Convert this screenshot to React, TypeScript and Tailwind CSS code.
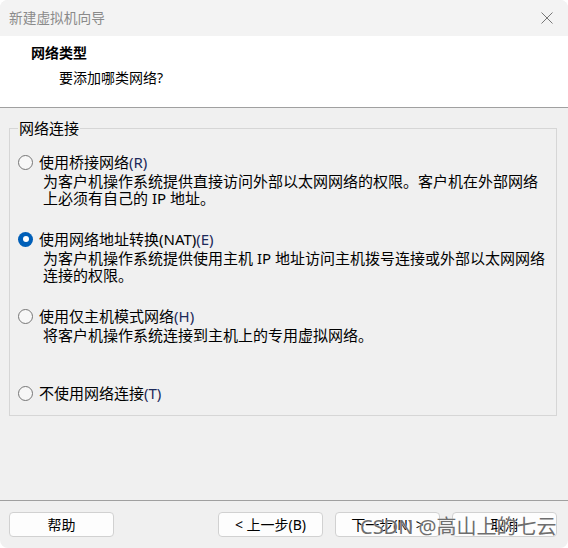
import React from "react";

const FONT = { fontFamily: '"Noto Sans", "Noto Sans CJK SC", sans-serif' };

const OPTIONS = [
  {
    id: "bridged",
    label: "使用桥接网络",
    key: "(R)",
    desc: ["为客户机操作系统提供直接访问外部以太网网络的权限。客户机在外部网络", "上必须有自己的 IP 地址。"],
  },
  {
    id: "nat",
    label: "使用网络地址转换(NAT)",
    key: "(E)",
    desc: ["为客户机操作系统提供使用主机 IP 地址访问主机拨号连接或外部以太网网络", "连接的权限。"],
  },
  {
    id: "hostonly",
    label: "使用仅主机模式网络",
    key: "(H)",
    desc: ["将客户机操作系统连接到主机上的专用虚拟网络。"],
  },
  {
    id: "none",
    label: "不使用网络连接",
    key: "(T)",
    desc: [],
  },
];

function Radio({ checked }: { checked: boolean }) {
  if (checked) {
    return (
      <span className="w-[15px] h-[15px] rounded-full bg-[#005fb8] flex items-center justify-center shrink-0">
        <span className="w-[6px] h-[6px] rounded-full bg-white" />
      </span>
    );
  }
  return <span className="w-[15px] h-[15px] rounded-full border border-[#767676] bg-[#f7f7f7] shrink-0" />;
}

function Button({ children, className = "" }: { children: React.ReactNode; className?: string }) {
  return (
    <button
      className={`h-[25px] rounded-[4px] border border-[#d1d1d1] bg-[#fdfdfd] text-[14px] text-black leading-none flex items-center justify-center ${className}`}
    >
      {children}
    </button>
  );
}

export default function App() {
  const selected = "nat";
  return (
    <div className="w-[568px] h-[548px] bg-white" style={FONT}>
      <div className="relative w-full h-full rounded-[8px] overflow-hidden bg-[#f0f0f0] flex flex-col">
        {/* title bar */}
        <div className="h-[36px] bg-[#f3f3f3] flex items-center pl-[9px] pr-[15px]">
          <span className="text-[13.7px] text-[#8a8a8a]">新建虚拟机向导</span>
          <svg className="ml-auto" width="12" height="12" viewBox="0 0 12 12">
            <path d="M0.5 0.5L11.5 11.5M11.5 0.5L0.5 11.5" stroke="#777" strokeWidth="1" />
          </svg>
        </div>

        {/* header */}
        <div className="h-[72px] bg-white border-b border-[#a0a0a0] pl-[31px] pt-[7px]">
          <div className="text-[14px] font-bold leading-[20px] text-black">网络类型</div>
          <div className="text-[14px] leading-[20px] mt-[5px] pl-[28px] text-black">要添加哪类网络?</div>
        </div>

        {/* body */}
        <div className="flex-1 pt-[10px]">
          <fieldset className="ml-[9px] mr-[11px] min-w-0 w-[548px] h-[298px] border border-[#d6d6d6] pl-[8px] pr-[8px] text-[15px] text-black">
            <legend className="px-[1px] leading-[20px]">网络连接</legend>
            <div className="pt-[14px] flex flex-col">
              {OPTIONS.map((o) => (
                <div key={o.id} className="h-[77px]">
                  <div className="flex items-center gap-[6px] h-[20px]">
                    <Radio checked={o.id === selected} />
                    <span className="whitespace-nowrap">
                      {o.label}
                      <span className="text-[#1c2a5a]">{o.key}</span>
                    </span>
                  </div>
                  <div className="pl-[25px] mt-[1px] leading-[17px]">
                    {o.desc.map((d) => (
                      <div key={d} className="whitespace-nowrap">
                        {d}
                      </div>
                    ))}
                  </div>
                </div>
              ))}
            </div>
          </fieldset>
        </div>

        {/* footer */}
        <div className="h-[48px] border-t border-[#a0a0a0] flex items-start pt-[11px] pl-[9px] pr-[11px]">
          <Button className="w-[105px]">帮助</Button>
          <div className="ml-auto flex gap-[12px]">
            <Button className="w-[105px]">&lt; 上一步(B)</Button>
            <Button className="w-[105px]">下一步(N) &gt;</Button>
            <Button className="w-[105px]">取消</Button>
          </div>
        </div>

        <div
          className="absolute left-[360px] top-[514px] text-[20px] leading-[26px] text-[#6e6e6e] pointer-events-none whitespace-nowrap"
          style={{ textShadow: "0 0 1px #fff" }}
        >
          CSDN @高山上的七云
        </div>
      </div>
    </div>
  );
}
